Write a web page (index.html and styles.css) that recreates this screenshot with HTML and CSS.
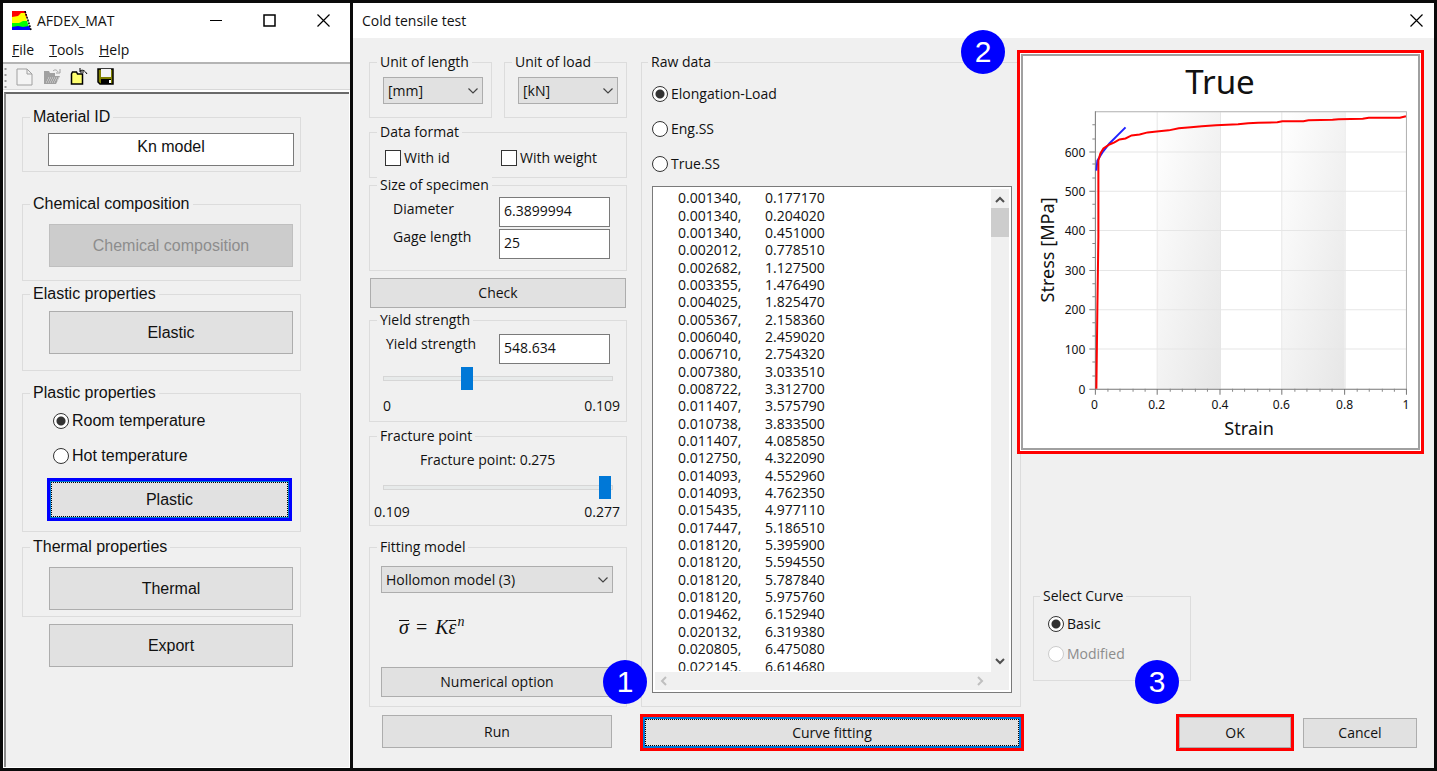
FILE: index.html
```html
<!DOCTYPE html>
<html lang="en">
<head>
    <meta charset="UTF-8">
    <meta name="viewport" content="width=device-width, initial-scale=1.0">
    <title>AFDEX_MAT</title>
    <link rel="stylesheet" href="styles.css">
</head>
<body>
    <div class="window main-window">
        <header class="titlebar">
            <svg class="logo" width="20" height="20" viewBox="0 0 20 20">
                <path d="M0 0h13l2 6-15 3z" fill="#f00"/>
                <path d="M0 6l6-1 3-3 4 0 2 8-15 4z" fill="#ff0"/>
                <path d="M0 12l7 0 4-2 4 0 2 6-17 1z" fill="#0f0"/>
                <path d="M0 16l6-1 5 1 6-1 2 4H0z" fill="#00f"/>
                <path d="M13 0l6 19" stroke="#000" stroke-width="1.500" stroke-dasharray="2 1" fill="none"/>
            </svg>
            <span class="title">AFDEX_MAT</span>
            <div class="window-controls">
                <button aria-label="Minimize"><svg width="13" height="13"><path d="M1 6.500h12" stroke="#000"/></svg></button>
                <button aria-label="Maximize"><svg width="13" height="13"><path d="M1 1h11v11H1z" stroke="#000" stroke-width="1.500" fill="none"/></svg></button>
                <button aria-label="Close"><svg width="13" height="13"><path d="M.5.5l12 12M12.500.5l-12 12" stroke="#000" stroke-width="1.200"/></svg></button>
            </div>
        </header>
        <nav class="menu">
            <a href="#"><u>F</u>ile</a>
            <a href="#"><u>T</u>ools</a>
            <a href="#"><u>H</u>elp</a>
        </nav>
        <div class="toolbar">
            <svg class="grip" width="3" height="22"><path d="M1.500 2v20" stroke="#999" stroke-width="2" stroke-dasharray="2 4"/></svg>
            <button disabled aria-label="New"><svg width="18" height="18" viewBox="0 0 18 18"><path d="M1 1h10l5 5v11H1zM11 1v5h5" fill="#f4f4f4" stroke="#a0a0a0"/></svg></button>
            <button disabled aria-label="Open"><svg width="18" height="18" viewBox="0 0 18 18"><path d="M1 3h5l1 2h5v3h5l-4 8H1z" fill="#a0a0a0"/><path d="M10 3c2-2 4-1 5 1M17 1v4h-4" stroke="#a0a0a0" fill="none"/><path d="M5 10h11M4 12h11M3 14h10" stroke="#ddd" stroke-dasharray="1 1"/></svg></button>
            <button aria-label="Import"><svg width="18" height="18" viewBox="0 0 18 18"><path d="M1.500 16V6l1-2h4l1 2h5v10z" fill="#ffff70" stroke="#000" stroke-width="1.500"/><path d="M10 3c3-2 5 0 7 3M10 0v4h4" stroke="#000" fill="none"/></svg></button>
            <button aria-label="Save"><svg width="18" height="18" viewBox="0 0 18 18"><path d="M1 1h15v15H3l-2-2z" fill="#808000" stroke="#000" stroke-width="1.500"/><path d="M4 1h10v8H4z" fill="#f4f4f4"/><path d="M4 11h10v5H4z" fill="#000"/><path d="M12 12h2v3h-2z" fill="#fff"/></svg></button>
        </div>
        <main class="panel">
            <fieldset class="group">
                <legend>Material ID</legend>
                <input class="material-id" type="text" value="Kn model" aria-label="Material ID">
            </fieldset>
            <fieldset class="group group-chemical">
                <legend>Chemical composition</legend>
                <button class="btn btn-large" disabled>Chemical composition</button>
            </fieldset>
            <fieldset class="group group-elastic">
                <legend>Elastic properties</legend>
                <button class="btn btn-large">Elastic</button>
            </fieldset>
            <fieldset class="group group-plastic">
                <legend>Plastic properties</legend>
                <label class="option"><input type="radio" name="temp" checked>Room temperature</label>
                <label class="option"><input type="radio" name="temp">Hot temperature</label>
                <button class="btn btn-large btn-plastic">Plastic</button>
            </fieldset>
            <fieldset class="group group-thermal">
                <legend>Thermal properties</legend>
                <button class="btn btn-large">Thermal</button>
            </fieldset>
            <button class="btn btn-large btn-export">Export</button>
        </main>
    </div>

    <div class="window dialog">
        <header class="titlebar">
            <span class="title">Cold tensile test</span>
            <div class="window-controls">
                <button aria-label="Close"><svg width="13" height="13"><path d="M.5.5l12 12M12.500.5l-12 12" stroke="#000" stroke-width="1.200"/></svg></button>
            </div>
        </header>
        <main class="dialog-body">
            <section class="settings">
                <div class="units">
                    <fieldset class="group">
                        <legend>Unit of length</legend>
                        <div class="select">
                            <select aria-label="Unit of length"><option>[mm]</option></select>
                            <svg width="10" height="6"><path d="M.5.5L5 5 9.500.5" stroke="#444" stroke-width="1.200" fill="none"/></svg>
                        </div>
                    </fieldset>
                    <fieldset class="group">
                        <legend>Unit of load</legend>
                        <div class="select">
                            <select aria-label="Unit of load"><option>[kN]</option></select>
                            <svg width="10" height="6"><path d="M.5.5L5 5 9.500.5" stroke="#444" stroke-width="1.200" fill="none"/></svg>
                        </div>
                    </fieldset>
                </div>
                <fieldset class="group group-format">
                    <legend>Data format</legend>
                    <div class="checks">
                        <label class="option"><input type="checkbox">With id</label>
                        <label class="option"><input type="checkbox">With weight</label>
                    </div>
                </fieldset>
                <fieldset class="group group-size">
                    <legend>Size of specimen</legend>
                    <div class="fields">
                        <div class="field-labels">
                            <label for="diameter">Diameter</label>
                            <label for="gage">Gage length</label>
                        </div>
                        <div class="field-inputs">
                            <input class="field" id="diameter" type="text" value="6.3899994">
                            <input class="field" id="gage" type="text" value="25">
                        </div>
                    </div>
                </fieldset>
                <button class="btn btn-check">Check</button>
                <fieldset class="group group-yield">
                    <legend>Yield strength</legend>
                    <div class="yield-row">
                        <label for="yield">Yield strength</label>
                        <input class="field" id="yield" type="text" value="548.634">
                    </div>
                    <input class="slider" type="range" min="0" max="109" value="39" aria-label="Yield strength">
                    <div class="scale"><span>0</span><span>0.109</span></div>
                </fieldset>
                <fieldset class="group group-fracture">
                    <legend>Fracture point</legend>
                    <label class="fracture-label" for="fracture">Fracture point: 0.275</label>
                    <input class="slider" id="fracture" type="range" min="109" max="277" value="276">
                    <div class="scale"><span>0.109</span><span>0.277</span></div>
                </fieldset>
                <fieldset class="group group-fitting">
                    <legend>Fitting model</legend>
                    <div class="select">
                        <select aria-label="Fitting model"><option>Hollomon model (3)</option></select>
                        <svg width="10" height="6"><path d="M.5.5L5 5 9.500.5" stroke="#444" stroke-width="1.200" fill="none"/></svg>
                    </div>
                    <p class="formula"><i class="bar">σ</i><span class="equals">=</span><i>K</i><i class="bar">ε</i><sup>n</sup></p>
                    <button class="btn btn-numerical">Numerical option</button>
                    <span class="badge badge-1">1</span>
                </fieldset>
            </section>

            <fieldset class="group raw">
                <legend>Raw data</legend>
                <label class="option"><input type="radio" name="raw" checked>Elongation-Load</label>
                <label class="option"><input type="radio" name="raw">Eng.SS</label>
                <label class="option"><input type="radio" name="raw">True.SS</label>
                <div class="listbox">
                    <div class="list-view">
                        <table>
                            <tr><td>0.001340,</td><td>0.177170</td></tr>
                            <tr><td>0.001340,</td><td>0.204020</td></tr>
                            <tr><td>0.001340,</td><td>0.451000</td></tr>
                            <tr><td>0.002012,</td><td>0.778510</td></tr>
                            <tr><td>0.002682,</td><td>1.127500</td></tr>
                            <tr><td>0.003355,</td><td>1.476490</td></tr>
                            <tr><td>0.004025,</td><td>1.825470</td></tr>
                            <tr><td>0.005367,</td><td>2.158360</td></tr>
                            <tr><td>0.006040,</td><td>2.459020</td></tr>
                            <tr><td>0.006710,</td><td>2.754320</td></tr>
                            <tr><td>0.007380,</td><td>3.033510</td></tr>
                            <tr><td>0.008722,</td><td>3.312700</td></tr>
                            <tr><td>0.011407,</td><td>3.575790</td></tr>
                            <tr><td>0.010738,</td><td>3.833500</td></tr>
                            <tr><td>0.011407,</td><td>4.085850</td></tr>
                            <tr><td>0.012750,</td><td>4.322090</td></tr>
                            <tr><td>0.014093,</td><td>4.552960</td></tr>
                            <tr><td>0.014093,</td><td>4.762350</td></tr>
                            <tr><td>0.015435,</td><td>4.977110</td></tr>
                            <tr><td>0.017447,</td><td>5.186510</td></tr>
                            <tr><td>0.018120,</td><td>5.395900</td></tr>
                            <tr><td>0.018120,</td><td>5.594550</td></tr>
                            <tr><td>0.018120,</td><td>5.787840</td></tr>
                            <tr><td>0.018120,</td><td>5.975760</td></tr>
                            <tr><td>0.019462,</td><td>6.152940</td></tr>
                            <tr><td>0.020132,</td><td>6.319380</td></tr>
                            <tr><td>0.020805,</td><td>6.475080</td></tr>
                            <tr><td>0.022145,</td><td>6.614680</td></tr>
                        </table>
                    </div>
                    <div class="scroll-v">
                        <svg width="10" height="7"><path d="M1 6l4-4 4 4" stroke="#505050" stroke-width="2" fill="none"/></svg>
                        <div class="thumb"></div>
                        <svg width="10" height="7"><path d="M1 1l4 4 4-4" stroke="#505050" stroke-width="2" fill="none"/></svg>
                    </div>
                    <div class="scroll-h">
                        <svg width="7" height="10"><path d="M6 1L2 5l4 4" stroke="#bfbfbf" stroke-width="2" fill="none"/></svg>
                        <svg width="7" height="10"><path d="M1 1l4 4-4 4" stroke="#bfbfbf" stroke-width="2" fill="none"/></svg>
                    </div>
                </div>
            </fieldset>

            <section class="output">
                <div class="highlight chart">
                    <svg viewBox="0 0 393 390" role="img" aria-label="True stress-strain curve">
                        <defs>
                            <linearGradient id="band" x1="0" y1="0" x2="1" y2="1">
                                <stop offset="0" stop-color="#fff"/>
                                <stop offset="1" stop-color="#e6e6e6"/>
                            </linearGradient>
                        </defs>
                        <path d="M134 56h62v275h-62z" fill="url(#band)"/>
                        <path d="M258 56h62v275h-62z" fill="url(#band)"/>
                        <path class="grid-line" d="M72 95.500h309M72 134.500h309M72 173.500h309M72 213.500h309M72 252.500h309M72 291.500h309M133.500 56v275M196.500 56v275M257.500 56v275M320.500 56v275"/>
                        <path class="plot-edge" d="M72 55.500h309.500v276"/>
                        <path class="axis" d="M72 55v276.500h310M66 95.500h6M66 134.500h6M66 173.500h6M66 213.500h6M66 252.500h6M66 291.500h6M66 331.500h6M72 331v6M133.500 331v6M196 331v6M257.500 331v6M320 331v6M381.500 331v6"/>
                        <path class="tick" d="M69 68.500h3M69 82.500h3M69 107.500h3M69 121.500h3M69 147.500h3M69 161.500h3M69 186.500h3M69 200.500h3M69 226.500h3M69 239.500h3M69 265.500h3M69 278.500h3M69 304.500h3M69 318.500h3M84.500 331v3M96.500 331v3M109.500 331v3M121.500 331v3M146.500 331v3M158.500 331v3M171.500 331v3M183.500 331v3M208.500 331v3M220.500 331v3M233.500 331v3M245.500 331v3M270.500 331v3M282.500 331v3M295.500 331v3M307.500 331v3M332.500 331v3M344.500 331v3M357.500 331v3M369.500 331v3"/>
                        <path class="curve curve-blue" d="M73 114l1-10 5-8 7-9 8-8 8-8"/>
                        <path class="curve curve-red" d="M73 331L74 250 75 180 75 104 77 97 80 92 86 88 91 86 96 83 102 82 108 79 116 78 124 76 133 75 145 74 155 72 167 71 178 70 192 69 214 68 224 67 234 66.500 253 66 258 65 279 65 284 64 308 63.500 314 63 338 62.500 344 61.500 375 61.500 381 60"/>
                        <text class="chart-title" x="196" y="38">True</text>
                        <g class="label-y">
                            <text x="62" y="100">600</text>
                            <text x="62" y="139">500</text>
                            <text x="62" y="178">400</text>
                            <text x="62" y="218">300</text>
                            <text x="62" y="257">200</text>
                            <text x="62" y="296">100</text>
                            <text x="62" y="336">0</text>
                        </g>
                        <g class="label-x">
                            <text x="71" y="351">0</text>
                            <text x="133" y="351">0.2</text>
                            <text x="196" y="351">0.4</text>
                            <text x="257" y="351">0.6</text>
                            <text x="320" y="351">0.8</text>
                            <text x="381" y="351">1</text>
                        </g>
                        <text class="axis-title" x="225" y="377">Strain</text>
                        <text class="axis-title" x="-193" y="31" transform="rotate(-90)">Stress [MPa]</text>
                    </svg>
                    <span class="badge badge-2">2</span>
                </div>
                <fieldset class="group group-curve">
                    <legend>Select Curve</legend>
                    <label class="option"><input type="radio" name="curve" checked>Basic</label>
                    <label class="option disabled"><input type="radio" name="curve" disabled>Modified</label>
                </fieldset>
            </section>

            <button class="btn btn-run">Run</button>
            <div class="highlight highlight-curve"><button class="btn btn-focus">Curve fitting</button></div>
            <div class="actions">
                <div class="highlight highlight-ok">
                    <button class="btn">OK</button>
                    <span class="badge badge-3">3</span>
                </div>
                <button class="btn btn-cancel">Cancel</button>
            </div>
        </main>
    </div>
</body>
</html>
```
FILE: styles.css
```css
* {
    box-sizing: border-box;
}

body {
    margin: 0;
    padding: 3px;
    min-height: 100vh;
    display: grid;
    grid-template-columns: 347px 1fr;
    gap: 3px;
    background: #0a0a0a;
    color: #111;
    font-family: "Open Sans", "Noto Sans", sans-serif;
    font-size: 14px;
    line-height: 20px;
}

button, input, select {
    font: inherit;
    color: inherit;
    margin: 0;
}

svg {
    display: block;
}

.window {
    display: flex;
    flex-direction: column;
    background: #fff;
    min-width: 0;
}

.titlebar {
    display: flex;
    align-items: center;
    height: 35px;
    padding: 0 11px 0 9px;
}

.logo {
    margin-right: 5px;
}

.window-controls {
    display: flex;
    gap: 41px;
    margin-left: auto;
}

.main-window .titlebar {
    padding-right: 20px;
}

.window-controls button,
.toolbar button {
    padding: 0;
    border: none;
    background: none;
}

.menu {
    display: flex;
    gap: 15px;
    padding: 2px 9px;
    border-bottom: 2px solid #b4b4b4;
}

.menu a {
    color: inherit;
    text-decoration: none;
}

.toolbar {
    display: flex;
    align-items: center;
    gap: 9px;
    height: 26px;
    padding-left: 1px;
    background: #f0f0f0;
    border-bottom: 1px solid #d8d8d8;
}

/* main window panel */
.panel {
    flex: 1;
    display: flex;
    flex-direction: column;
    margin: 2px 1px 1px;
    padding: 13px 48px 0 16px;
    background: #f0f0f0;
    border-top: 2px solid #696969;
    border-left: 2px solid #8a8a8a;
    font-family: "Liberation Sans", Arial, sans-serif;
    font-size: 16px;
}

.group {
    position: relative;
    display: flex;
    flex-direction: column;
    min-width: 0;
    margin: 0;
    padding: 0;
    border: 1px solid #dcdcdc;
}

.group legend {
    margin-left: 7px;
    padding: 0 3px;
    background: #f0f0f0;
}

.btn {
    height: 30px;
    padding: 0;
    border: 1px solid #adadad;
    background: #e1e1e1;
}

.btn:disabled {
    background: #ccc;
    border-color: #bfbfbf;
    color: #8c8c8c;
}

.btn-large {
    height: 43px;
    margin: 0 7px 0 26px;
}

.material-id {
    height: 33px;
    margin: 6px 6px 5px 25px;
    padding: 0 0 6px;
    border: 1px solid #7a7a7a;
    text-align: center;
}

.group-chemical {
    margin-top: 22px;
    padding: 10px 0 13px;
}

.group-elastic {
    margin-top: 3px;
    padding: 7px 0 16px;
}

.group-plastic {
    margin-top: 12px;
    padding-bottom: 10px;
}

.group-thermal {
    margin-top: 5px;
    padding: 10px 0 6px;
}

.btn-export {
    margin: 7px 8px 0 27px;
}

.option {
    display: flex;
    align-items: center;
    gap: 3px;
    height: 35px;
}

.option input {
    appearance: none;
    width: 16px;
    height: 16px;
    border: 1px solid #333;
    background: #fff;
}

.option input[type="radio"] {
    border-radius: 50%;
}

.option input[type="radio"]:checked {
    background: radial-gradient(circle, #333 4px, #fff 5px);
}

.option.disabled {
    color: #8c8c8c;
}

.option.disabled input {
    border-color: #ccc;
}

.group-plastic .option {
    margin-left: 30px;
}

.btn-plastic {
    margin: 5px 8px 0 24px;
    border: 3px solid #00f;
    outline: 1px dotted #000;
    outline-offset: -5px;
    box-shadow: inset 0 0 0 1px #0078d7;
}

/* dialog */
.dialog-body {
    flex: 1;
    display: grid;
    grid-template-columns: 258px 1fr 400px;
    grid-template-rows: auto 37px;
    row-gap: 7px;
    align-content: start;
    padding: 14px 10px 17px 16px;
    background: #f0f0f0;
}

.settings {
    display: flex;
    flex-direction: column;
}

.units {
    display: grid;
    grid-template-columns: 1fr 1fr;
    gap: 12px;
}

.units .group {
    padding: 5px 8px 13px 13px;
}

.units legend {
    margin-left: -6px;
}

.select {
    position: relative;
    display: flex;
}

.select select {
    appearance: none;
    width: 100%;
    height: 27px;
    padding: 0 4px;
    border: 1px solid #adadad;
    border-radius: 0;
    background: #e1e1e1;
}

.select svg {
    position: absolute;
    right: 5px;
    top: 11px;
    pointer-events: none;
}

.group-format {
    margin-top: 4px;
    padding-bottom: 3px;
}

.group-format .option {
    height: 32px;
}

.checks {
    display: grid;
    grid-template-columns: 116px 1fr;
    padding-left: 15px;
}

.group-size {
    margin-top: -3px;
    padding-bottom: 11px;
}

.fields {
    display: flex;
    justify-content: space-between;
    padding: 0 16px 0 23px;
}

.field-labels {
    display: flex;
    flex-direction: column;
    line-height: 28px;
}

.field-inputs {
    display: flex;
    flex-direction: column;
    gap: 2px;
    padding-top: 2px;
}

.field {
    width: 111px;
    height: 30px;
    padding: 0 4px 4px;
    border: 1px solid #7a7a7a;
    background: #fff;
}

.btn-check {
    margin: 7px 1px 0;
}

.group-yield {
    margin-top: 2px;
    padding: 4px 0 5px;
}

.yield-row {
    display: flex;
    justify-content: space-between;
    padding: 0 16px;
}

.slider {
    appearance: none;
    height: 23px;
    margin: 3px 13px 0;
    background: none;
}

.slider::-webkit-slider-runnable-track {
    height: 5px;
    border: 1px solid #d6d6d6;
    background: #e7eaea;
}

.slider::-webkit-slider-thumb {
    appearance: none;
    width: 12px;
    height: 23px;
    margin-top: -10px;
    background: #0078d7;
}

.scale {
    display: flex;
    justify-content: space-between;
    padding: 6px 6px 0 13px;
}

.group-fracture {
    margin-top: 4px;
    padding: 4px 0 3px;
}

.fracture-label {
    margin: 0 0 3px 50px;
}

.group-fracture .scale {
    padding: 3px 6px 0 4px;
}

.group-fitting {
    margin-top: 11px;
    padding: 9px 13px 9px 11px;
}

.group-fitting legend {
    margin-left: -4px;
}

.formula {
    height: 74px;
    margin: 0;
    padding: 24px 0 0 18px;
    font-family: "Liberation Serif", serif;
    font-size: 20px;
}

.formula i {
    display: inline-block;
    line-height: 12px;
}

.formula .bar {
    margin-right: 1px;
    border-top: 1px solid #111;
}

.formula .equals {
    margin: 0 8px 0 6px;
}

.formula sup {
    font-size: 14px;
    font-style: italic;
    line-height: 0;
}

.raw {
    margin: 0 3px 0 14px;
    padding: 4px 8px 13px 10px;
}

.raw legend {
    margin-left: -4px;
}

.listbox {
    flex: 1;
    display: grid;
    grid-template-columns: 1fr 18px;
    grid-template-rows: 1fr 18px;
    margin-top: 5px;
    padding: 2px;
    border: 1px solid #7a7a7a;
    background: #fff;
}

.list-view {
    height: 482px;
    overflow: hidden;
}

.list-view table {
    height: 486px;
    margin-left: 23px;
    border-spacing: 0;
    line-height: 17px;
}

.list-view td {
    padding: 0;
}

.list-view td:first-child {
    width: 87px;
}

.scroll-v {
    display: flex;
    flex-direction: column;
    align-items: center;
    padding: 7px 0;
    background: #f0f0f0;
}

.scroll-v svg:last-child {
    margin-top: auto;
}

.thumb {
    width: 18px;
    height: 29px;
    margin-top: 5px;
    background: #cdcdcd;
}

.scroll-h {
    grid-column: 1 / 3;
    display: flex;
    align-items: center;
    justify-content: space-between;
    padding: 0 25px 0 5px;
    background: #f0f0f0;
}

.output {
    display: flex;
    flex-direction: column;
}

.highlight {
    position: relative;
    display: flex;
    border: 3px solid #f00;
}

.highlight .btn {
    flex: 1;
    height: 31px;
}

.chart {
    margin: -2px 0 0 -7px;
    padding: 1px;
    background: #fff;
}

.chart > svg {
    width: 100%;
    border: 2px solid #a0a0a0;
}

.chart text {
    fill: #111;
    font-family: "Noto Sans", sans-serif;
    font-size: 12px;
    text-anchor: middle;
}

.chart .label-y text {
    text-anchor: end;
}

.chart .chart-title {
    font-size: 33px;
}

.chart .axis-title {
    font-size: 18px;
}

.grid-line {
    stroke: #e6e6e6;
}

.plot-edge {
    fill: none;
    stroke: #b0b0b0;
}

.axis {
    fill: none;
    stroke: #777;
}

.tick {
    stroke: #888;
}

.curve {
    fill: none;
    stroke-width: 2;
}

.curve-blue {
    stroke: #22f;
}

.curve-red {
    stroke: #f00;
}

.group-curve {
    width: 158px;
    margin: auto 0 26px 9px;
    padding: 3px 0 11px 14px;
}

.group-curve legend {
    margin-left: -8px;
}

.group-curve .option {
    height: 30px;
}

.btn-run {
    height: 33px;
    margin: 1px 15px 0 13px;
}

.highlight-curve {
    margin-left: 13px;
}

.btn-focus {
    border: 1px solid #0078d7;
    outline: 1px dotted #000;
    outline-offset: -3px;
    box-shadow: inset 0 0 0 1px #0078d7;
}

.actions {
    display: flex;
    justify-content: flex-end;
    align-items: center;
    gap: 9px;
    padding-right: 7px;
}

.highlight-ok {
    width: 118px;
}

.btn-cancel {
    width: 114px;
}

/* numbered step markers */
.badge {
    position: absolute;
    z-index: 1;
    width: 44px;
    height: 44px;
    border-radius: 50%;
    background: #00f;
    color: #fff;
    font-family: "Liberation Sans", Arial, sans-serif;
    font-size: 30px;
    line-height: 44px;
    text-align: center;
}

.badge-1 {
    right: -21px;
    bottom: 2px;
}

.badge-2 {
    left: -59px;
    top: -23px;
}

.badge-3 {
    left: -44px;
    top: -57px;
}
```
